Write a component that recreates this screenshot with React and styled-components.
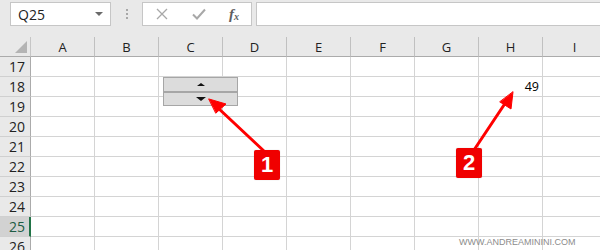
import React from "react";
import styled, { createGlobalStyle } from "styled-components";

const GlobalStyle = createGlobalStyle`
  html, body {
    margin: 0;
    padding: 0;
    background: #ffffff;
  }
  body {
    font-family: "Open Sans", "Noto Sans", sans-serif;
  }
`;

const columns = ["A", "B", "C", "D", "E", "F", "G", "H", "I"];
const rows = [17, 18, 19, 20, 21, 22, 23, 24, 25, 26];
const values = { "18-H": "49" };

function App() {
  return (
    <Page>
      <GlobalStyle />
      <Toolbar>
        <NameBox>
          <span>Q25</span>
          <Caret />
        </NameBox>
        <Grip>
          <i />
          <i />
          <i />
        </Grip>
        <FormulaButtons>
          <svg width="14" height="14" viewBox="0 0 14 14">
            <path d="M2 2 L12 12 M12 2 L2 12" stroke="#a8a8a8" strokeWidth="1.3" fill="none" />
          </svg>
          <svg width="16" height="14" viewBox="0 0 16 14">
            <path d="M2 7.5 L6 11.5 L14 2.5" stroke="#a8a8a8" strokeWidth="2" fill="none" />
          </svg>
          <Fx>
            f<sub>x</sub>
          </Fx>
        </FormulaButtons>
        <FormulaInput />
      </Toolbar>

      <Sheet>
        <Corner>
          <svg width="12" height="12" viewBox="0 0 12 12">
            <path d="M12 0 L12 12 L0 12 Z" fill="#b4b4b4" />
          </svg>
        </Corner>
        {columns.map((c) => (
          <ColHeader key={c}>{c}</ColHeader>
        ))}
        {rows.map((r) => (
          <React.Fragment key={r}>
            <RowHeader $selected={r === 25}>{r}</RowHeader>
            {columns.map((c) => (
              <Cell key={c}>{values[`${r}-${c}`]}</Cell>
            ))}
          </React.Fragment>
        ))}

        <Spinner>
          <SpinButton>
            <Tri $up $size={4} />
          </SpinButton>
          <SpinButton>
            <Tri $size={5} />
          </SpinButton>
        </Spinner>
      </Sheet>

      <Arrows width="600" height="250" viewBox="0 0 600 250">
        <g stroke="#ff0000" strokeWidth="3" fill="#ff0000" strokeLinecap="round">
          <line x1="265" y1="152" x2="217" y2="107" />
          <path d="M209 99 L226 104 L216 113 Z" strokeWidth="1" strokeLinejoin="round" />
          <line x1="474" y1="150" x2="506" y2="102" />
          <path d="M513 92 L511 109 L500 102 Z" strokeWidth="1" strokeLinejoin="round" />
        </g>
      </Arrows>

      <Badge style={{ left: 254, top: 150 }}>1</Badge>
      <Badge style={{ left: 456, top: 148 }}>2</Badge>

      <Watermark>WWW.ANDREAMININI.COM</Watermark>
    </Page>
  );
}

const Page = styled.div`
  position: relative;
  width: 600px;
  height: 250px;
  overflow: hidden;
  background: #ffffff;
`;

const Toolbar = styled.div`
  height: 37px;
  box-sizing: border-box;
  padding: 2px 0 0 10px;
  background: #e9e9e9;
  display: flex;
  align-items: flex-start;
`;

const NameBox = styled.div`
  width: 101px;
  height: 24px;
  box-sizing: border-box;
  border: 1px solid #c6c6c6;
  background: #ffffff;
  display: flex;
  align-items: center;
  justify-content: space-between;
  padding: 0 7px 0 7px;
  font-size: 14px;
  color: #222;
`;

const Caret = styled.div`
  width: 0;
  height: 0;
  border-left: 4px solid transparent;
  border-right: 4px solid transparent;
  border-top: 4px solid #6a6a6a;
`;

const Grip = styled.div`
  width: 31px;
  height: 24px;
  display: flex;
  flex-direction: column;
  align-items: center;
  justify-content: center;
  gap: 2px;
  i {
    width: 2px;
    height: 2px;
    background: #a8a8a8;
  }
`;

const FormulaButtons = styled.div`
  width: 110px;
  height: 24px;
  box-sizing: border-box;
  border: 1px solid #c6c6c6;
  background: #ffffff;
  display: flex;
  align-items: center;
  justify-content: space-between;
  padding: 0 12px 0 12px;
`;

const Fx = styled.span`
  font-family: "Liberation Serif", "DejaVu Serif", serif;
  font-style: italic;
  font-weight: bold;
  font-size: 15px;
  color: #5e5e5e;
  line-height: 1;
  sub {
    font-size: 10px;
    vertical-align: -1px;
  }
`;

const FormulaInput = styled.div`
  flex: 1;
  margin-left: 4px;
  height: 24px;
  box-sizing: border-box;
  border: 1px solid #c6c6c6;
  border-right: none;
  background: #ffffff;
`;

const Sheet = styled.div`
  position: relative;
  display: grid;
  grid-template-columns: 31px repeat(9, 64px);
  grid-template-rows: 20px;
  grid-auto-rows: 20px;
`;

const Corner = styled.div`
  background: #e9e9e9;
  border-right: 1px solid #c6c6c6;
  border-bottom: 1px solid #ababab;
  box-sizing: border-box;
  display: flex;
  align-items: flex-end;
  justify-content: flex-end;
  padding: 0 3px 3px 0;
`;

const ColHeader = styled.div`
  background: #e9e9e9;
  box-sizing: border-box;
  border-bottom: 1px solid #ababab;
  border-right: 1px solid #c0c0c0;
  display: flex;
  align-items: center;
  justify-content: center;
  font-size: 13px;
  color: #222;
`;

const RowHeader = styled.div`
  box-sizing: border-box;
  background: ${(p) => (p.$selected ? "#d2d2d2" : "#e9e9e9")};
  border-bottom: 1px solid #d0d0d0;
  border-right: ${(p) => (p.$selected ? "2px solid #217346" : "1px solid #ababab")};
  display: flex;
  align-items: center;
  justify-content: flex-end;
  padding-right: ${(p) => (p.$selected ? "4px" : "5px")};
  font-size: 14px;
  color: ${(p) => (p.$selected ? "#1e5c44" : "#222")};
`;

const Cell = styled.div`
  box-sizing: border-box;
  border-right: 1px solid #d4d4d4;
  border-bottom: 1px solid #d4d4d4;
  display: flex;
  align-items: center;
  justify-content: flex-end;
  padding-right: 3px;
  font-size: 12.5px;
  color: #000;
`;

const Spinner = styled.div`
  position: absolute;
  left: 163px;
  top: 40px;
  width: 75px;
  height: 29px;
  box-sizing: border-box;
  border: 1px solid #a6a6a6;
  background: #dcdcdc;
  display: flex;
  flex-direction: column;
`;

const SpinButton = styled.div`
  flex: 1;
  display: flex;
  align-items: center;
  justify-content: center;
  & + & {
    border-top: 2px solid #a6a6a6;
  }
`;

const Tri = styled.div`
  width: 0;
  height: 0;
  border-left: ${(p) => p.$size}px solid transparent;
  border-right: ${(p) => p.$size}px solid transparent;
  ${(p) =>
    p.$up
      ? `border-bottom: ${p.$size - 1}px solid #111;`
      : `border-top: ${p.$size - 1}px solid #111;`}
`;

const Arrows = styled.svg`
  position: absolute;
  left: 0;
  top: 0;
  pointer-events: none;
`;

const Badge = styled.div`
  position: absolute;
  width: 26px;
  height: 30px;
  background: #f00000;
  border-radius: 2px;
  display: flex;
  align-items: center;
  justify-content: center;
  color: #ffffff;
  font-family: "Liberation Sans", Arial, sans-serif;
  font-weight: bold;
  font-size: 22px;
  box-shadow: 0 0 1px rgba(0, 0, 0, 0.3);
`;

const Watermark = styled.div`
  position: absolute;
  left: 459px;
  top: 237px;
  font-family: "Liberation Sans", Arial, sans-serif;
  font-size: 9px;
  letter-spacing: 0;
  color: #8c8c8c;
`;

export default App;
